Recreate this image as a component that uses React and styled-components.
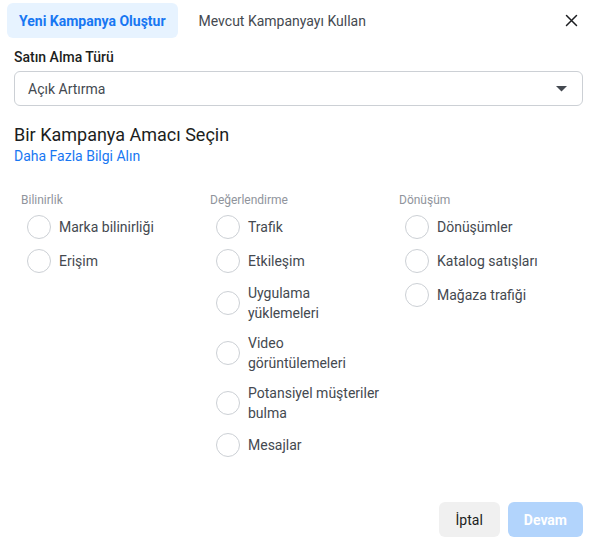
import React from "react";
import styled, { createGlobalStyle } from "styled-components";

const GlobalStyle = createGlobalStyle`
  html, body {
    margin: 0;
    padding: 0;
    background: #fff;
  }
  body {
    font-family: Roboto, "Liberation Sans", Arial, sans-serif;
    color: #444950;
  }
  * {
    box-sizing: border-box;
  }
`;

const objectives = [
  {
    title: "Bilinirlik",
    items: ["Marka bilinirliği", "Erişim"],
  },
  {
    title: "Değerlendirme",
    items: [
      "Trafik",
      "Etkileşim",
      "Uygulama yüklemeleri",
      "Video görüntülemeleri",
      "Potansiyel müşteriler bulma",
      "Mesajlar",
    ],
  },
  {
    title: "Dönüşüm",
    items: ["Dönüşümler", "Katalog satışları", "Mağaza trafiği"],
  },
];

export default function App() {
  return (
    <>
      <GlobalStyle />
      <Dialog>
        <Header>
          <Tabs>
            <Tab active>Yeni Kampanya Oluştur</Tab>
            <Tab>Mevcut Kampanyayı Kullan</Tab>
          </Tabs>
          <CloseButton aria-label="Kapat">
            <svg width="13" height="13" viewBox="0 0 13 13">
              <path
                d="M1.5 1.5 L11.5 11.5 M11.5 1.5 L1.5 11.5"
                stroke="#1c1e21"
                strokeWidth="1.5"
                strokeLinecap="round"
              />
            </svg>
          </CloseButton>
        </Header>

        <Body>
          <FieldLabel>Satın Alma Türü</FieldLabel>
          <Select>
            <span>Açık Artırma</span>
            <svg width="11" height="6" viewBox="0 0 11 6">
              <path d="M0 0 H11 L5.5 5.5 Z" fill="#444950" />
            </svg>
          </Select>

          <Title>Bir Kampanya Amacı Seçin</Title>
          <LearnMore href="#">Daha Fazla Bilgi Alın</LearnMore>

          <Columns>
            {objectives.map((col) => (
              <Column key={col.title}>
                <ColumnTitle>{col.title}</ColumnTitle>
                <Options>
                  {col.items.map((item) => (
                    <Option key={item}>
                      <Radio />
                      <OptionText>{item}</OptionText>
                    </Option>
                  ))}
                </Options>
              </Column>
            ))}
          </Columns>
        </Body>

        <Footer>
          <Button>İptal</Button>
          <Button primary disabled>
            Devam
          </Button>
        </Footer>
      </Dialog>
    </>
  );
}

const Dialog = styled.div`
  width: 595px;
  min-height: 548px;
  display: flex;
  flex-direction: column;
`;

const Header = styled.div`
  display: flex;
  align-items: center;
  justify-content: space-between;
  padding: 3px 17px 0 7px;
`;

const Tabs = styled.div`
  display: flex;
  align-items: center;
  gap: 9px;
`;

const Tab = styled.div`
  height: 35px;
  display: flex;
  align-items: center;
  padding: 0 12px;
  border-radius: 6px;
  font-size: 14px;
  font-weight: ${(p) => (p.active ? 700 : 400)};
  color: ${(p) => (p.active ? "#1877f2" : "#444950")};
  background: ${(p) => (p.active ? "#e7f3ff" : "transparent")};
`;

const CloseButton = styled.button`
  border: 0;
  background: none;
  padding: 0;
  width: 13px;
  height: 13px;
  display: flex;
  cursor: pointer;
`;

const Body = styled.div`
  padding: 0 12px 0 14px;
`;

const FieldLabel = styled.div`
  margin-top: 11px;
  font-size: 14px;
  line-height: 16px;
  font-weight: 500;
  color: #1c1e21;
`;

const Select = styled.div`
  margin-top: 6px;
  height: 35px;
  border: 1px solid #ccd0d5;
  border-radius: 6px;
  display: flex;
  align-items: center;
  justify-content: space-between;
  padding: 0 15px 0 13px;
  font-size: 14px;
  color: #444950;
`;

const Title = styled.div`
  margin-top: 18px;
  font-size: 18px;
  line-height: 22px;
  color: #1c1e21;
`;

const LearnMore = styled.a`
  display: block;
  margin-top: 1px;
  font-size: 14px;
  line-height: 18px;
  color: #1877f2;
  text-decoration: none;
`;

const Columns = styled.div`
  margin-top: 27px;
  padding-left: 7px;
  display: grid;
  grid-template-columns: repeat(3, 189px);
`;

const Column = styled.div`
  display: flex;
  flex-direction: column;
`;

const ColumnTitle = styled.div`
  font-size: 12px;
  line-height: 16px;
  color: #90949c;
`;

const Options = styled.div`
  margin-top: 7px;
  padding-left: 6px;
  display: flex;
  flex-direction: column;
  gap: 10px;
`;

const Option = styled.label`
  display: flex;
  align-items: center;
  gap: 8px;
  cursor: pointer;
`;

const Radio = styled.span`
  flex: none;
  width: 24px;
  height: 24px;
  border-radius: 50%;
  border: 1px solid #ccd0d5;
  background: #fff;
`;

const OptionText = styled.span`
  font-size: 14px;
  line-height: 20px;
  color: #444950;
  max-width: 133px;
`;

const Footer = styled.div`
  margin-top: auto;
  display: flex;
  justify-content: flex-end;
  gap: 8px;
  padding: 0 12px 11px 0;
`;

const Button = styled.button`
  height: 35px;
  border: 0;
  border-radius: 6px;
  padding: 0 ${(p) => (p.primary ? "16px" : "17px")};
  font-family: Roboto, "Liberation Sans", Arial, sans-serif;
  font-size: 14px;
  font-weight: ${(p) => (p.primary ? 700 : 400)};
  color: ${(p) => (p.primary ? "#fff" : "#1c1e21")};
  background: ${(p) => (p.primary ? "#b2d4fc" : "#f0f0f0")};
  cursor: pointer;
`;
